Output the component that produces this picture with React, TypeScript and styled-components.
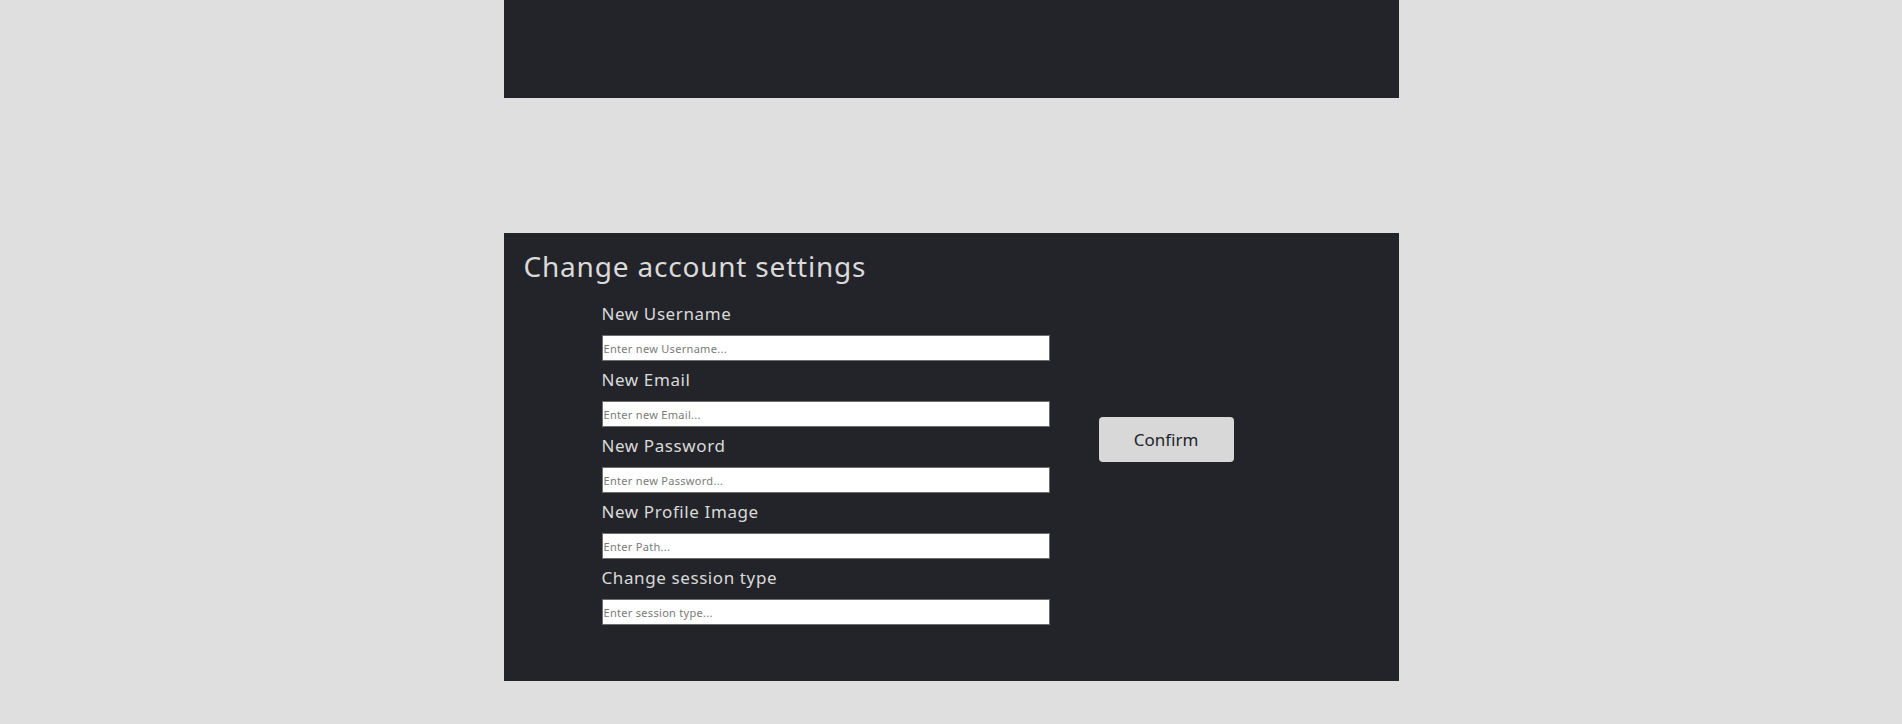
import styled, { createGlobalStyle } from 'styled-components';

const GlobalStyle = createGlobalStyle`
    body {
        margin: 0;
        background: #dfdfdf;
        font-family: "Noto Sans", "DejaVu Sans", sans-serif;
    }
`;

const fields = [
    { label: "New Username", placeholder: "Enter new Username..." },
    { label: "New Email", placeholder: "Enter new Email..." },
    { label: "New Password", placeholder: "Enter new Password..." },
    { label: "New Profile Image", placeholder: "Enter Path..." },
    { label: "Change session type", placeholder: "Enter session type..." },
];

const App = () => {
    return (
        <Page>
            <GlobalStyle />
            <TopPanel />
            <SettingsPanel>
                <Title>Change account settings</Title>
                <Body>
                    <Form>
                        {fields.map(f => (
                            <Field key={f.label}>
                                <Label>{f.label}</Label>
                                <Input type="text" placeholder={f.placeholder} />
                            </Field>
                        ))}
                    </Form>
                    <ConfirmButton>Confirm</ConfirmButton>
                </Body>
            </SettingsPanel>
        </Page>
    );
}

export default App;

const Page = styled.div`
    display: flex;
    flex-direction: column;
    align-items: center;
    gap: 135px;
    min-height: 724px;
`

const TopPanel = styled.div`
    width: 895px;
    height: 98px;
    background: #232429;
`

const SettingsPanel = styled.div`
    width: 895px;
    box-sizing: border-box;
    background: #232429;
    padding: 14px 20px 56px;
    color: #dadada;
`

const Title = styled.h2`
    margin: 0;
    font-size: 28px;
    line-height: 38px;
    font-weight: 400;
    letter-spacing: 0.8px;
    color: #dadada;
`

const Body = styled.div`
    display: flex;
    align-items: flex-start;
    padding-left: 78px;
    margin-top: 10px;
    gap: 49px;
`

const Form = styled.div`
    display: flex;
    flex-direction: column;
    width: 448px;
`

const Field = styled.div`
    display: flex;
    flex-direction: column;
`

const Label = styled.label`
    font-size: 17px;
    line-height: 24px;
    letter-spacing: 0.6px;
    margin: 7px 0 9px;
    color: #dadada;
`

const Input = styled.input`
    box-sizing: border-box;
    width: 100%;
    height: 26px;
    margin: 0;
    padding: 0 1px;
    border: 1px solid #6e6e6e;
    background: #ffffff;
    font-family: "Noto Sans", "DejaVu Sans", sans-serif;
    font-size: 11px;
    letter-spacing: 0.3px;
    outline: none;
    &::placeholder {
        color: #7a7a7a;
    }
`

const ConfirmButton = styled.button`
    width: 135px;
    height: 45px;
    margin-top: 122px;
    border: none;
    border-radius: 4px;
    background: #d8d8d8;
    color: #23252b;
    font-family: "Noto Sans", "DejaVu Sans", sans-serif;
    font-size: 17px;
    cursor: pointer;
`
